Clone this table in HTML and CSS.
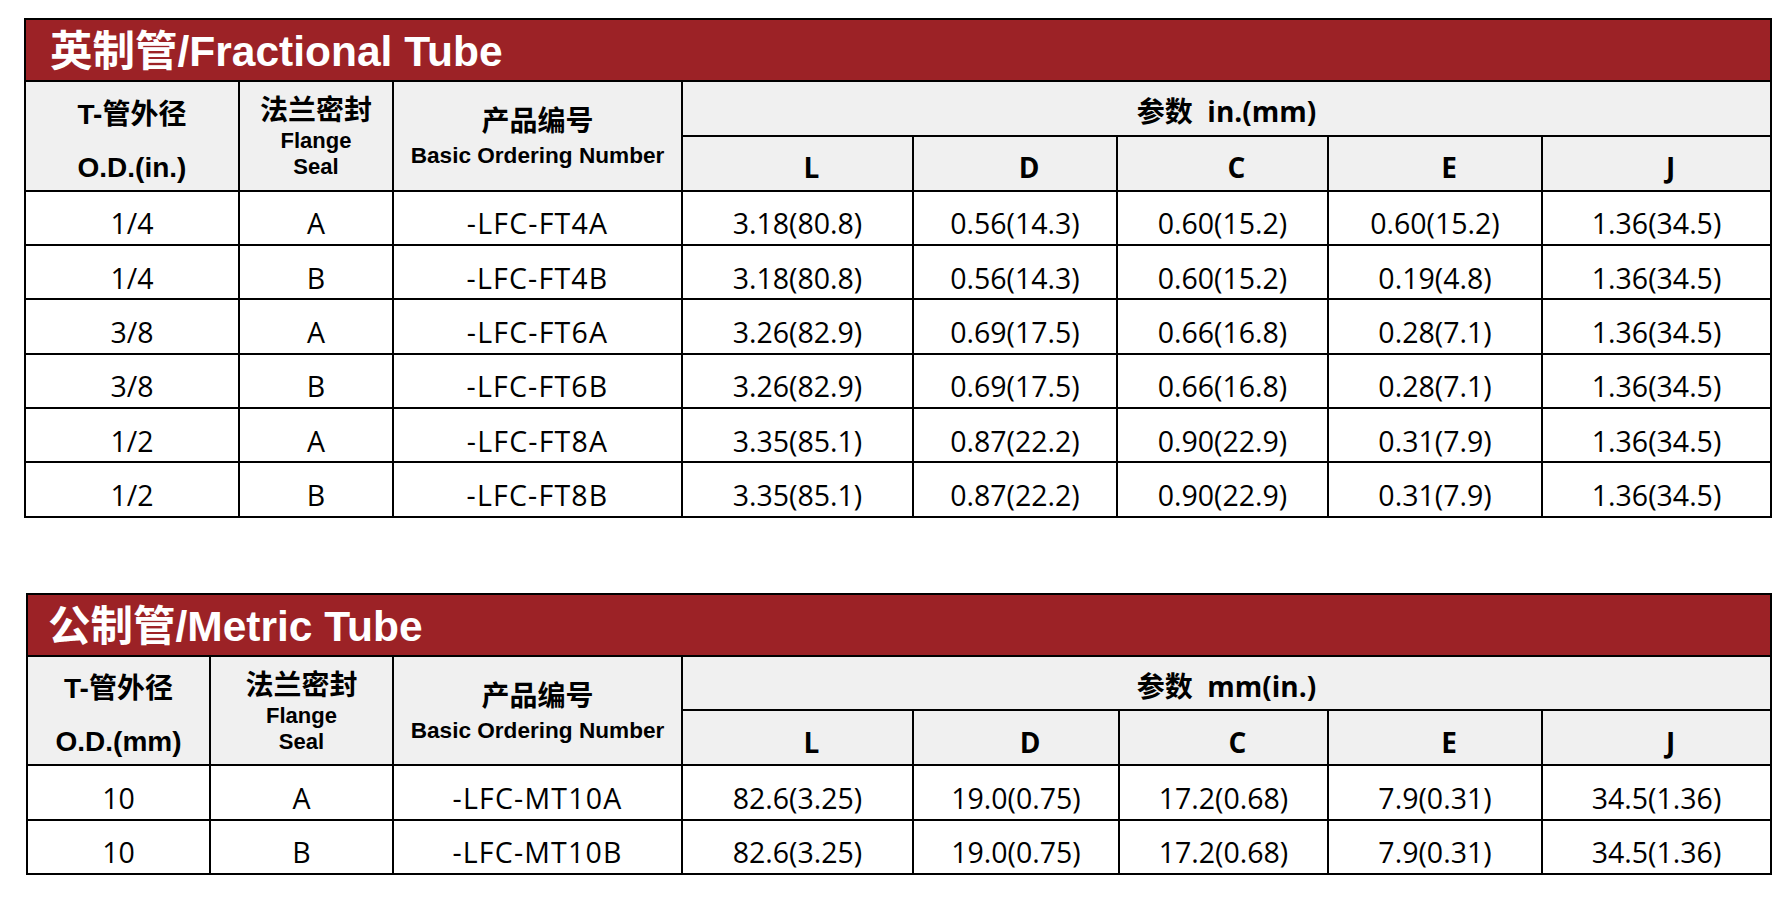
FILE: index.html
```html
<!DOCTYPE html>
<html lang="zh-CN">
<head>
<meta charset="utf-8">
<title>Fractional / Metric Tube</title>
<link rel="stylesheet" href="styles.css">
</head>
<body>
<div class="page">
  <table class="spec spec-frac">
    <colgroup>
      <col class="f1"><col class="f2"><col class="f3"><col class="f4"><col class="f5"><col class="f6"><col class="f7"><col class="f8">
    </colgroup>
    <tr class="r-title"><th class="title title-frac" colspan="8">英制管/Fractional Tube</th></tr>
    <tr class="r-h1">
      <th class="hd hd-od" rowspan="2"><span class="ln ln1">T-管外径</span><span class="ln ln2">O.D.(in.)</span></th>
      <th class="hd hd-seal" rowspan="2"><span class="cn">法兰密封</span><span class="en">Flange</span><span class="en">Seal</span></th>
      <th class="hd hd-num" rowspan="2"><span class="cn">产品编号</span><span class="en">Basic Ordering Number</span></th>
      <th class="hd hd-par" colspan="5">参数&nbsp; in.(mm)</th>
    </tr>
    <tr class="r-h2">
      <th class="hd hd-let">L</th><th class="hd hd-let">D</th><th class="hd hd-let">C</th><th class="hd hd-let">E</th><th class="hd hd-let">J</th>
    </tr>
    <tr class="r-d"><td>1/4</td><td>A</td><td class="code">-LFC-FT4A</td><td>3.18(80.8)</td><td>0.56(14.3)</td><td>0.60(15.2)</td><td>0.60(15.2)</td><td>1.36(34.5)</td></tr>
    <tr class="r-d"><td>1/4</td><td>B</td><td class="code">-LFC-FT4B</td><td>3.18(80.8)</td><td>0.56(14.3)</td><td>0.60(15.2)</td><td>0.19(4.8)</td><td>1.36(34.5)</td></tr>
    <tr class="r-d"><td>3/8</td><td>A</td><td class="code">-LFC-FT6A</td><td>3.26(82.9)</td><td>0.69(17.5)</td><td>0.66(16.8)</td><td>0.28(7.1)</td><td>1.36(34.5)</td></tr>
    <tr class="r-d"><td>3/8</td><td>B</td><td class="code">-LFC-FT6B</td><td>3.26(82.9)</td><td>0.69(17.5)</td><td>0.66(16.8)</td><td>0.28(7.1)</td><td>1.36(34.5)</td></tr>
    <tr class="r-d"><td>1/2</td><td>A</td><td class="code">-LFC-FT8A</td><td>3.35(85.1)</td><td>0.87(22.2)</td><td>0.90(22.9)</td><td>0.31(7.9)</td><td>1.36(34.5)</td></tr>
    <tr class="r-d"><td>1/2</td><td>B</td><td class="code">-LFC-FT8B</td><td>3.35(85.1)</td><td>0.87(22.2)</td><td>0.90(22.9)</td><td>0.31(7.9)</td><td>1.36(34.5)</td></tr>
  </table>

  <table class="spec spec-met">
    <colgroup>
      <col class="m1"><col class="m2"><col class="m3"><col class="m4"><col class="m5"><col class="m6"><col class="m7"><col class="m8">
    </colgroup>
    <tr class="r-title"><th class="title title-met" colspan="8">公制管/Metric Tube</th></tr>
    <tr class="r-h1">
      <th class="hd hd-od" rowspan="2"><span class="ln ln1">T-管外径</span><span class="ln ln2">O.D.(mm)</span></th>
      <th class="hd hd-seal" rowspan="2"><span class="cn">法兰密封</span><span class="en">Flange</span><span class="en">Seal</span></th>
      <th class="hd hd-num" rowspan="2"><span class="cn">产品编号</span><span class="en">Basic Ordering Number</span></th>
      <th class="hd hd-par" colspan="5">参数&nbsp; mm(in.)</th>
    </tr>
    <tr class="r-h2">
      <th class="hd hd-let">L</th><th class="hd hd-let">D</th><th class="hd hd-let">C</th><th class="hd hd-let">E</th><th class="hd hd-let">J</th>
    </tr>
    <tr class="r-d"><td>10</td><td>A</td><td class="code">-LFC-MT10A</td><td>82.6(3.25)</td><td>19.0(0.75)</td><td>17.2(0.68)</td><td>7.9(0.31)</td><td>34.5(1.36)</td></tr>
    <tr class="r-d"><td>10</td><td>B</td><td class="code">-LFC-MT10B</td><td>82.6(3.25)</td><td>19.0(0.75)</td><td>17.2(0.68)</td><td>7.9(0.31)</td><td>34.5(1.36)</td></tr>
  </table>
</div>
</body>
</html>
```
FILE: styles.css
```css
html, body {
  margin: 0;
  padding: 0;
  background: #ffffff;
}

.page {
  display: flex;
  flex-direction: column;
  align-items: flex-start;
  padding-top: 18px;
  gap: 75px;
}

.spec {
  border-collapse: collapse;
  table-layout: fixed;
  color: #000;
}

.spec-frac { margin-left: 24px; width: 1748px; }
.spec-met  { margin-left: 26px; width: 1746px; }

.f1 { width: 214px; } .f2 { width: 154px; } .f3 { width: 289px; } .f4 { width: 231px; }
.f5 { width: 204px; } .f6 { width: 211px; } .f7 { width: 214px; } .f8 { width: 229px; }

.m1 { width: 183px; } .m2 { width: 183px; } .m3 { width: 289px; } .m4 { width: 231px; }
.m5 { width: 206px; } .m6 { width: 209px; } .m7 { width: 214px; } .m8 { width: 229px; }

.spec th, .spec td {
  border: 2px solid #000;
  padding: 0;
  text-align: center;
}

.r-title { height: 62px; }
.r-h1 { height: 54.5px; }
.r-h2 { height: 55px; }
.r-d { height: 54.4px; }

.spec .title {
  background: #9c2226;
  color: #fff;
  text-align: left;
  font-family: "Liberation Sans", "Noto Sans CJK SC", sans-serif;
  font-weight: 700;
  font-size: 42.5px;
  line-height: 1;
  vertical-align: middle;
  padding-top: 4px;
}
.spec .title-frac { padding-left: 24px; }
.spec .title-met { padding-left: 20px; }

.spec .hd {
  background: #f0f0f0;
  font-family: "Liberation Sans", "Noto Sans CJK SC", sans-serif;
  font-weight: 700;
  vertical-align: top;
}

/* O.D. column: two lines */
.spec .hd-od { padding-top: 12.5px; }
.hd-od .ln {
  display: block;
  font-size: 28px;
  line-height: 40px;
}
.hd-od .ln2 { margin-top: 13px; }

/* Flange seal column */
.spec .hd-seal { padding-top: 12px; }
.hd-seal .cn {
  display: block;
  font-size: 28px;
  line-height: 34px;
}
.hd-seal .en {
  display: block;
  font-size: 22px;
  line-height: 26px;
}

/* Ordering number column */
.spec .hd-num { padding-top: 22px; }
.hd-num .cn {
  display: block;
  font-size: 28px;
  line-height: 36px;
}
.hd-num .en {
  display: block;
  font-size: 22.6px;
  line-height: 32px;
}

/* Parameter group & letters */
.spec .hd-par, .spec .hd-let {
  font-family: "Open Sans", "Noto Sans CJK SC", sans-serif;
  font-size: 28px;
}
.spec .hd-par { padding-top: 11px; line-height: 36px; }
.spec .hd-let { padding-top: 14.5px; padding-left: 28px; line-height: 32px; }

.spec td {
  font-family: "Open Sans", "Noto Sans CJK SC", sans-serif;
  font-size: 28.5px;
  line-height: 36px;
  padding-top: 11px;
  vertical-align: middle;
}

.spec td.code {
  letter-spacing: 1.2px;
}
```
